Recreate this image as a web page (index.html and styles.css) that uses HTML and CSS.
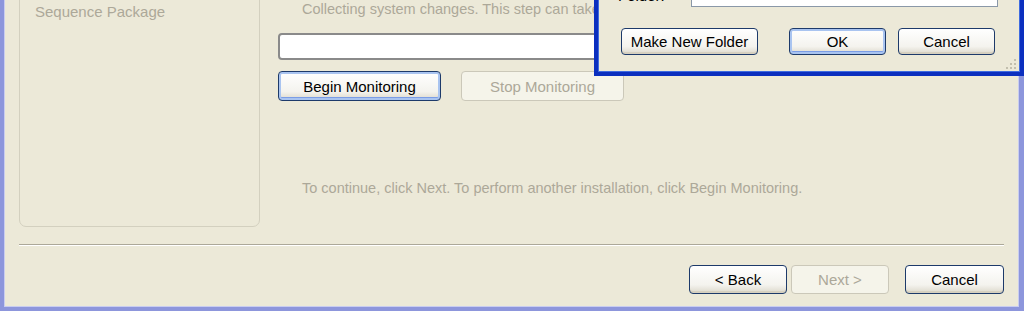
FILE: index.html
```html
<!DOCTYPE html>
<html>
<head>
  <title>Sequencing Wizard</title>
  <link rel="stylesheet" href="styles.css">
</head>
<body>
  <div class="window">
    <div class="main">
      <div class="sidebar">
        <div class="step">Sequence Package</div>
      </div>

      <div class="panel">
        <div class="note clip">Collecting system changes. This step can take several minutes.</div>
        <div class="progress"></div>
        <div class="monitor-buttons">
          <button class="btn default wide">Begin Monitoring</button>
          <button class="btn wide" disabled>Stop Monitoring</button>
        </div>
        <div class="note hint">To continue, click Next. To perform another installation, click Begin Monitoring.</div>
      </div>
    </div>

    <div class="separator"></div>

    <div class="footer">
      <button class="btn nav">&lt; Back</button>
      <button class="btn nav" disabled>Next &gt;</button>
      <button class="btn nav cancel">Cancel</button>
    </div>
  </div>

  <!-- browse for folder dialog, sits over the wizard -->
  <div class="dialog">
    <div class="folder-row">
      <span class="folder-label">Folder:</span>
      <div class="folder-input"></div>
    </div>
    <div class="dialog-buttons">
      <button class="btn new-folder">Make New Folder</button>
      <span class="spacer"></span>
      <button class="btn default small">OK</button>
      <button class="btn small">Cancel</button>
    </div>
    <svg class="grip" width="14" height="14" viewBox="0 0 14 14">
      <rect x="10" y="2" width="2" height="2" fill="#c2bfae"/>
      <rect x="6" y="6" width="2" height="2" fill="#c2bfae"/>
      <rect x="10" y="6" width="2" height="2" fill="#c2bfae"/>
      <rect x="2" y="10" width="2" height="2" fill="#c2bfae"/>
      <rect x="6" y="10" width="2" height="2" fill="#c2bfae"/>
      <rect x="10" y="10" width="2" height="2" fill="#c2bfae"/>
    </svg>
  </div>
</body>
</html>
```

FILE: styles.css
```css
html, body {
  margin: 0;
  padding: 0;
}
body {
  width: 1024px;
  height: 311px;
  overflow: hidden;
  position: relative;
  background-color: #ece9d8;
  font-family: "Liberation Sans", Arial, sans-serif;
  font-size: 15px;
}
.window {
  box-sizing: border-box;
  height: 311px;
  background-color: #ece9d8;
  border-left: 4px solid #8d96dc;
  border-right: 5px solid #8d96dc;
  border-bottom: 4px solid #8d96dc;
  box-shadow: inset 1px 0 0 #c9cdf0, inset -1px -1px 0 #c9cdf0;
}
.main {
  display: flex;
  padding-left: 15px;
  height: 227px;
}
.sidebar {
  box-sizing: border-box;
  width: 241px;
  height: 239px;
  margin-top: -12px;
  border: 1px solid #d3d0bf;
  border-radius: 7px;
  padding: 14px 0 0 15px;
}
.step {
  color: #aca899;
  line-height: 18px;
}
.panel {
  margin-left: 18px;
  flex: 1;
}
.note {
  color: #aca899;
  font-size: 14.5px;
  line-height: 18px;
  margin-top: 1px;
  padding-left: 24px;
  white-space: nowrap;
}
.note.clip {
  margin-top: 0;
  width: 292px;
  overflow: hidden;
}
.progress {
  box-sizing: border-box;
  width: 560px;
  height: 27px;
  margin-top: 15px;
  background-color: #fff;
  border: 2px solid #8a8a8a;
  border-radius: 4px;
}
.monitor-buttons {
  display: flex;
  gap: 20px;
  margin-top: 11px;
}
.hint {
  margin-top: 78px;
}
.btn {
  box-sizing: border-box;
  font-family: "Liberation Sans", Arial, sans-serif;
  font-size: 15px;
  color: #000;
  border: 1px solid #1d3a6a;
  border-radius: 4px;
  background: linear-gradient(#ffffff, #f4f3ee 70%, #dcd8cb);
  box-shadow: inset 0 -2px 0 #d6d0c0;
  padding: 0;
}
.btn.default {
  box-shadow: inset 0 0 0 2px #a9c4f0, inset 0 -3px 0 #7b9de6;
}
.btn:disabled {
  color: #aca899;
  border-color: #cbc8b9;
  background: #f5f4ea;
  box-shadow: none;
}
.wide {
  width: 163px;
  height: 30px;
}
.separator {
  margin: 17px 15px 0 15px;
  height: 1px;
  background-color: #aca899;
  border-bottom: 1px solid #fff;
}
.footer {
  display: flex;
  justify-content: flex-end;
  gap: 4px;
  padding-right: 15px;
  margin-top: 19px;
}
.nav {
  width: 98px;
  height: 29px;
}
.nav.cancel {
  margin-left: 12px;
  width: 99px;
}
.dialog {
  position: absolute;
  left: 594px;
  top: -40px;
  width: 430px;
  height: 116px;
  box-sizing: border-box;
  background-color: #ece9d8;
  border: 4px solid #0b2fbf;
  box-shadow: inset 0 0 0 1px #3f6be0;
  padding: 20px 22px 0 20px;
}
.folder-row {
  display: flex;
  align-items: center;
  height: 22px;
}
.folder-label {
  width: 73px;
  margin-top: 1px;
}
.folder-input {
  flex: 1;
  height: 24px;
  box-sizing: border-box;
  background-color: #fff;
  border: 1px solid #8a98a8;
}
.dialog-buttons {
  display: flex;
  gap: 12px;
  margin-top: 22px;
  padding-left: 3px;
  padding-right: 3px;
}
.spacer {
  flex: 1;
}
.new-folder {
  width: 137px;
  height: 27px;
}
.small {
  width: 97px;
  height: 27px;
}
.grip {
  position: absolute;
  right: 2px;
  bottom: 1px;
}
```
